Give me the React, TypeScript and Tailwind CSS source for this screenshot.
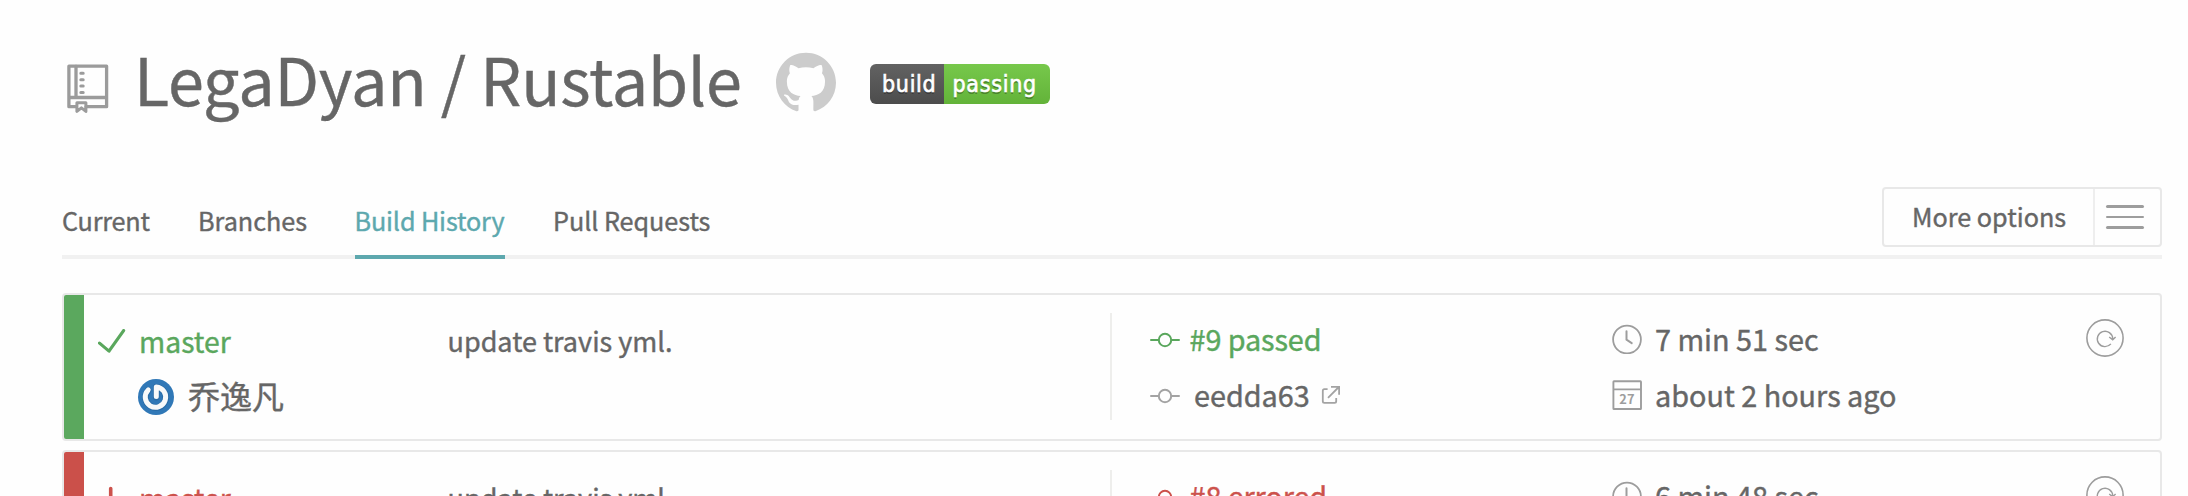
import React from "react";
import { SiGithub } from "react-icons/si";

type Build = {
  id: number;
  passed: boolean;
  state: string;
  duration: string;
};

const builds: Build[] = [
  { id: 9, passed: true, state: "passed", duration: "7 min 51 sec" },
  { id: 8, passed: false, state: "errored", duration: "6 min 48 sec" },
];

function RepoIcon({ className }: { className: string }) {
  return (
    <svg className={className} viewBox="0 0 42 50" fill="none" stroke="#9b9b9b" strokeWidth="3.3" strokeLinejoin="round" strokeLinecap="round">
      <path d="M8.5 42.7H1.9V2.2H39.6V42.7H19M1.9 33.5H39.6M9 2V33.3" />
      <path d="M13.8 9.2H16.2M13.8 15.7H16.2M13.8 22.1H16.2M13.8 28.5H16.2" strokeWidth="3" />
      <path d="M9.9 38.7H18.9V47.4L14.4 43.8L9.9 47.4Z" strokeWidth="3" />
    </svg>
  );
}

function CheckIcon() {
  return (
    <svg className="h-7 w-7" viewBox="0 0 28 28" fill="none" stroke="#5aa75d" strokeWidth="3.2" strokeLinecap="round" strokeLinejoin="round">
      <path d="M1.5 14.1L11 22.1L25.6 1.6" />
    </svg>
  );
}

function ErrorIcon() {
  return (
    <svg className="h-7 w-7" viewBox="0 0 28 28" fill="none" stroke="#cc524c" strokeWidth="3.6" strokeLinecap="round">
      <path d="M12.7 2.6V17M12.7 24.5V25" />
    </svg>
  );
}

function CommitIcon({ ring, line }: { ring: string; line: string }) {
  return (
    <svg className="h-[30px] w-[30px]" viewBox="0 0 30 30" fill="none" strokeWidth="2">
      <path d="M1 16H8.5M21.5 16H29" stroke={line} strokeLinecap="round" />
      <circle cx="15" cy="16" r="6.2" stroke={ring} />
    </svg>
  );
}

function ExternalIcon() {
  return (
    <svg className="h-[20px] w-[20px]" viewBox="0 0 20 20" fill="none" stroke="#a3a3a3" strokeWidth="1.8">
      <path d="M6.6 4.2H3.4Q1.8 4.2 1.8 5.8V16.2Q1.8 17.8 3.4 17.8H13.6Q15.2 17.8 15.2 16.2V13M7 12.8L17.8 2M10 1.8H18.1V9.8" />
    </svg>
  );
}

function ClockIcon() {
  return (
    <svg className="h-[30px] w-[30px]" viewBox="0 0 30 30" fill="none" stroke="#9d9d9d">
      <circle cx="15" cy="15.5" r="13.9" strokeWidth="1.8" />
      <path d="M14.5 7.2V15.7L19.7 19.1" strokeWidth="2" strokeLinecap="round" strokeLinejoin="round" />
    </svg>
  );
}

function CalendarIcon() {
  return (
    <svg className="h-[30px] w-[30px]" viewBox="0 0 30 30" fill="none" stroke="#9d9d9d" strokeWidth="1.9">
      <rect x="1.4" y="1.3" width="27.6" height="27.7" rx="0.6" />
      <path d="M1.4 9.4H29" />
      <text x="15.1" y="24" textAnchor="middle" fill="#9d9d9d" stroke="none" fontSize="12.8" fontWeight="700" letterSpacing="0.3" fontFamily="'Noto Sans CJK SC', sans-serif">
        27
      </text>
    </svg>
  );
}

function RestartIcon() {
  return (
    <svg className="h-[38px] w-[38px]" viewBox="0 0 38 38" fill="none" stroke="#9d9d9d">
      <circle cx="19" cy="19" r="18.1" strokeWidth="1.6" />
      <path d="M24.9 24.9A7.7 7.7 0 1 1 26.7 19.6M23.2 18L26.7 20.8L29.6 18" strokeWidth="1.4" />
    </svg>
  );
}

function Avatar() {
  return (
    <svg className="h-9 w-9" viewBox="0 0 36 36" fill="none">
      <circle cx="18" cy="18" r="18" fill="#3078b7" />
      <path d="M18.3 18.2V8.2A10.2 10.2 0 1 1 10.2 11.4" stroke="#1f5c92" strokeOpacity="0.45" strokeWidth="6.6" strokeLinecap="round" strokeLinejoin="round" />
      <path d="M18.3 17.6V7.9A10.2 10.2 0 1 1 10.2 10.9" stroke="#f7f9fa" strokeWidth="5" strokeLinecap="round" strokeLinejoin="round" />
    </svg>
  );
}

function BuildCard({ build }: { build: Build }) {
  const tone = build.passed ? "text-[#5aa75d]" : "text-[#cc524c]";
  const bar = build.passed ? "bg-[#5ba85e]" : "bg-[#cb504a]";
  return (
    <li className="flex h-[148px] shrink-0 overflow-hidden rounded-[4px] border-2 border-[#e8e8e8] bg-[#fefefe]">
      <div className={`w-5 ${bar}`} />
      <div className="flex w-[1026px] flex-col gap-5 pt-7">
        <div className={`flex h-9 items-center text-[28.3px] ${tone}`}>
          <div className="ml-[14px] w-[41px] pt-1">{build.passed ? <CheckIcon /> : <ErrorIcon />}</div>
          <span className="w-[308.5px] leading-9">master</span>
          <span className="text-[27px] leading-9 text-[#666]">update travis yml.</span>
        </div>
        <div className="flex h-9 items-center gap-[14px] pl-[54px] text-[32px]">
          <Avatar />
          <span className="-mt-1 leading-[34px]">乔逸凡</span>
        </div>
      </div>
      <div className="mt-[18px] h-[107px] w-0.5 bg-[#eeeeec]" />
      <div className="flex w-[463px] flex-col gap-5 pl-[38px] pt-[26px] text-[28.8px] leading-9">
        <div className={`flex h-9 items-center gap-[9.5px] tracking-[-0.1px] ${tone}`}>
          <CommitIcon ring={build.passed ? "#5aa75d" : "#cc524c"} line={build.passed ? "#5aa75d" : "#e9b5b2"} />
          <span>#{build.id} {build.state}</span>
        </div>
        <div className="flex h-9 items-center">
          <CommitIcon ring="#a3a3a3" line="#a3a3a3" />
          <span className="ml-[14px] w-[127px]">eedda63</span>
          <ExternalIcon />
        </div>
      </div>
      <div className="flex w-[447px] flex-col gap-5 pl-[37px] pt-[26px] text-[28.8px] leading-9">
        <div className="flex h-9 items-center gap-[13px]">
          <ClockIcon />
          <span>{build.duration}</span>
        </div>
        <div className="flex h-9 items-center gap-[13px]">
          <CalendarIcon />
          <span>about 2 hours ago</span>
        </div>
      </div>
      <button className="ml-auto mr-[36px] mt-6 self-start" aria-label="Restart build">
        <RestartIcon />
      </button>
    </li>
  );
}

const tabs = ["Current", "Branches", "Build History", "Pull Requests"];
const tabWidths = [
  "w-[88px] tracking-[-0.2px]",
  "w-[109px]",
  "w-[150px] tracking-[-0.13px] -indent-[0.5px]",
  "w-[158px] tracking-[-0.05px]",
];

export default function App() {
  return (
    <main className="flex h-[496px] w-[2188px] flex-col overflow-hidden bg-[#fefefe] pl-[62px] pr-[26px] font-['Noto_Sans_CJK_SC',sans-serif] text-[#666] whitespace-nowrap [-webkit-text-stroke:0.4px]">
      <header className="flex h-[187px] shrink-0 items-start">
        <RepoIcon className="ml-[5px] mt-[64px] h-[50px] w-[42px]" />
        <h1 className="ml-[25px] mt-[38px] w-[642px] text-[64.8px] leading-[80px] tracking-[-0.22px]">LegaDyan / Rustable</h1>
        <SiGithub className="mt-[52px] h-[60px] w-[60px] text-[#ccc]" />
        <div className="ml-[34px] mt-[64px] flex h-10 overflow-hidden rounded-[6px] font-['DejaVu_Sans_Condensed','DejaVu_Sans',sans-serif] text-[23px] leading-[40px] tracking-[0.7px] text-white [-webkit-text-stroke:0.6px] [text-shadow:0_2px_0_rgba(1,1,1,0.3)]">
          <span className="w-[74px] bg-linear-to-b from-[#626262] to-[#4c4c4c] pl-[12px]">build</span>
          <span className="w-[106px] bg-linear-to-b from-[#77c84b] to-[#63b339] pl-[8.5px]">passing</span>
        </div>
      </header>
      <nav className="flex h-[72px] shrink-0 justify-between border-b-4 border-[#f1f1f1] text-[25.2px]">
        <div className="flex items-end gap-12">
          {tabs.map((tab, i) => (
            <a
              key={tab}
              className={`-mb-1 h-[58px] border-b-4 leading-[38px] ${tabWidths[i]} ${
                tab === "Build History" ? "border-[#5da8ae] text-[#5da8ae]" : "border-transparent"
              }`}
            >
              {tab}
            </a>
          ))}
        </div>
        <div className="flex h-[60px] w-[280px] rounded-[4px] border-2 border-[#e8e8e8]">
          <span className="w-[209px] pl-7 leading-[54px]">More options</span>
          <span className="flex grow flex-col items-start gap-2 border-l-2 border-[#eee] pl-[11px] pt-4">
            <i className="h-[2.5px] w-[38px] rounded-full bg-[#9d9d9d]" />
            <i className="h-[2.5px] w-[38px] rounded-full bg-[#9d9d9d]" />
            <i className="h-[2.5px] w-[38px] rounded-full bg-[#9d9d9d]" />
          </span>
        </div>
      </nav>
      <ul className="mt-[34px] flex flex-col gap-[9px]">
        {builds.map((build) => (
          <BuildCard key={build.id} build={build} />
        ))}
      </ul>
    </main>
  );
}
